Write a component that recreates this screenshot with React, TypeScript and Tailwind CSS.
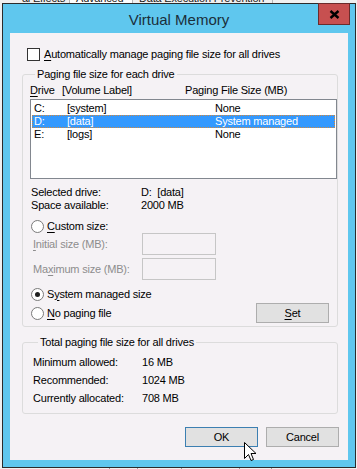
import type { ReactNode } from "react";

const font = "font-['Liberation_Sans',Arial,sans-serif]";

function U({ children }: { children: ReactNode }) {
  return <span className="underline underline-offset-[2px]">{children}</span>;
}

function Radio({ checked }: { checked?: boolean }) {
  return (
    <span className="flex h-[13px] w-[13px] shrink-0 items-center justify-center rounded-full border border-[#7a7a7a] bg-white">
      {checked && <span className="h-[5px] w-[5px] rounded-full bg-[#1f1f1f]" />}
    </span>
  );
}

function Button({ children, primary, className = "" }: { children: ReactNode; primary?: boolean; className?: string }) {
  return (
    <div
      className={`flex h-[20px] w-[73px] items-center justify-center bg-[#e1e1e1] text-black ${
        primary ? "border border-[#3c7fb1]" : "border border-[#adadad]"
      } ${className}`}
    >
      {children}
    </div>
  );
}

const drives = [
  { d: "C:", label: "[system]", size: "None" },
  { d: "D:", label: "[data]", size: "System managed", selected: true },
  { d: "E:", label: "[logs]", size: "None" },
];

export default function App() {
  return (
    <div
      className={`relative h-[469px] w-[357px] overflow-hidden whitespace-nowrap bg-[#f0f0f0] text-[11px] leading-none tracking-[-0.2px] text-black ${font}`}
    >
      {/* window behind the dialog */}
      <div className="flex h-[3px] items-end overflow-hidden bg-[#f0f0f0] text-[#1a1a1a]">
        <div className="-mb-[1px] flex h-[14px] w-[70px] items-end justify-end border-r border-[#b5b5b5] pr-[4px]">al Effects</div>
        <div className="-mb-[1px] flex h-[14px] w-[63px] items-end border-r border-[#b5b5b5] bg-white pl-[6px]">Advanced</div>
        <div className="-mb-[1px] flex h-[14px] w-[140px] items-end border-r border-[#b5b5b5] pl-[6px]">Data Execution Prevention</div>
      </div>

      <div className="ml-[2px] flex h-[465px] w-[354px] flex-col border border-[#2b2b2b] bg-[#5fc7ee]">
        {/* title bar */}
        <div className="grid h-[29px] grid-cols-[1fr_auto_1fr]">
          <div />
          <div className="pt-[8px] text-[15px] tracking-normal text-[#1b2f3a]">Virtual Memory</div>
          <div className="flex justify-end pr-[5px]">
            <div className="-mt-px flex h-[22px] w-[32px] items-center justify-center border border-[#6b2b2b] bg-[#c75050]">
              <svg width="11" height="9" viewBox="0 0 11 9">
                <path d="M1.5 1 L9.5 8 M9.5 1 L1.5 8" stroke="#000" strokeWidth="2.4" />
              </svg>
            </div>
          </div>
        </div>

        {/* client area */}
        <div className="ml-[7px] flex h-[427px] w-[338px] flex-col bg-[#f5f2f5] pl-[12px]">
          <div className="mt-[15px] flex h-[13px] items-center pl-[5px]">
            <span className="h-[13px] w-[13px] border border-[#333] bg-white" />
            <span className="ml-[4px]">
              <U>A</U>utomatically manage paging file size for all drives
            </span>
          </div>

          <fieldset className="mt-[6px] w-[316px] rounded-[3px] border border-[#dcdcdc] pb-[3px] pl-[7px]">
            <legend className="ml-[5px] h-[14px] px-[2px] leading-[14px]">Paging file size for each drive</legend>
            <div className="mt-[2px] flex h-[14px] items-center">
              <span className="w-[32px]">
                <U>D</U>rive
              </span>
              <span className="w-[123px]">[Volume Label]</span>
              <span>Paging File Size (MB)</span>
            </div>
            <div className="mt-[2px] h-[80px] w-[307px] border border-[#82878f] bg-white pt-[2px]">
              {drives.map((r) => (
                <div
                  key={r.d}
                  className={`mx-px flex h-[13px] items-center pl-[1px] ${
                    r.selected ? "border border-dotted border-[#d2883d] bg-[#3399ff] text-white" : "border border-transparent"
                  }`}
                >
                  <span className="w-[33px]">{r.d}</span>
                  <span className="w-[148px]">{r.label}</span>
                  <span>{r.size}</span>
                </div>
              ))}
            </div>

            <div className="mt-[7px] flex h-[13px] items-center pl-[1px]">
              <span className="w-[110px]">Selected drive:</span>
              <span>D:&nbsp;&nbsp;[data]</span>
            </div>
            <div className="flex h-[13px] items-center pl-[1px]">
              <span className="w-[110px]">Space available:</span>
              <span>2000 MB</span>
            </div>

            <div className="mt-[7px] flex h-[14px] items-center pl-[1px]">
              <Radio />
              <span className="ml-[3px]">
                <U>C</U>ustom size:
              </span>
            </div>
            <div className="flex h-[22px] items-center text-[#8d8d8d]">
              <span className="w-[112px] pl-[3px]">
                <U>I</U>nitial size (MB):
              </span>
              <span className="h-[22px] w-[74px] border border-[#c6c6c6]" />
            </div>
            <div className="mt-[3px] flex h-[22px] items-center text-[#8d8d8d]">
              <span className="w-[112px] pl-[3px]">
                Ma<U>x</U>imum size (MB):
              </span>
              <span className="h-[22px] w-[74px] border border-[#c6c6c6]" />
            </div>

            <div className="mt-[7px] flex h-[14px] items-center pl-[1px]">
              <Radio checked />
              <span className="ml-[3px]">
                S<U>y</U>stem managed size
              </span>
            </div>
            <div className="mt-[2px] flex h-[20px] items-center justify-between pl-[1px] pr-[8px]">
              <div className="flex items-center">
                <Radio />
                <span className="ml-[3px]">
                  <U>N</U>o paging file
                </span>
              </div>
              <Button>
                <U>S</U>et
              </Button>
            </div>
          </fieldset>

          <fieldset className="mt-[8px] w-[316px] rounded-[3px] border border-[#dcdcdc] pb-[6px] pl-[10px]">
            <legend className="ml-[5px] h-[14px] px-[2px] leading-[14px]">Total paging file size for all drives</legend>
            <div className="mt-[4px] flex h-[18px] items-center">
              <span className="w-[109px]">Minimum allowed:</span>
              <span>16 MB</span>
            </div>
            <div className="flex h-[18px] items-center">
              <span className="w-[109px]">Recommended:</span>
              <span>1024 MB</span>
            </div>
            <div className="flex h-[18px] items-center">
              <span className="w-[109px]">Currently allocated:</span>
              <span>708 MB</span>
            </div>
          </fieldset>

          <div className="mt-[13px] flex justify-end gap-[8px] pr-[9px]">
            <Button primary>OK</Button>
            <Button>Cancel</Button>
          </div>
        </div>
      </div>

      {/* bits of the window underneath, bottom strip */}
      <div className="flex h-[2px] bg-[#f0f0f0]">
        <div className="w-[110px] border-r border-[#9a9a9a]" />
        <div className="w-[28px] border-r border-[#9a9a9a]" />
        <div className="w-[44px] border-r border-[#9a9a9a]" />
        <div className="w-[58px] border-r border-[#9a9a9a]" />
        <div className="w-[32px] border-r border-[#9a9a9a]" />
      </div>

      {/* mouse pointer */}
      <svg className="absolute left-[244px] top-[442px]" width="13" height="20" viewBox="0 0 13 20">
        <path
          d="M0.5 0.5 L0.5 16.5 L4.5 12.5 L7 18.5 L9.5 17.5 L7 11.5 L12 11.5 Z"
          fill="#fff"
          stroke="#000"
          strokeWidth="1"
          strokeLinejoin="miter"
        />
      </svg>
    </div>
  );
}
